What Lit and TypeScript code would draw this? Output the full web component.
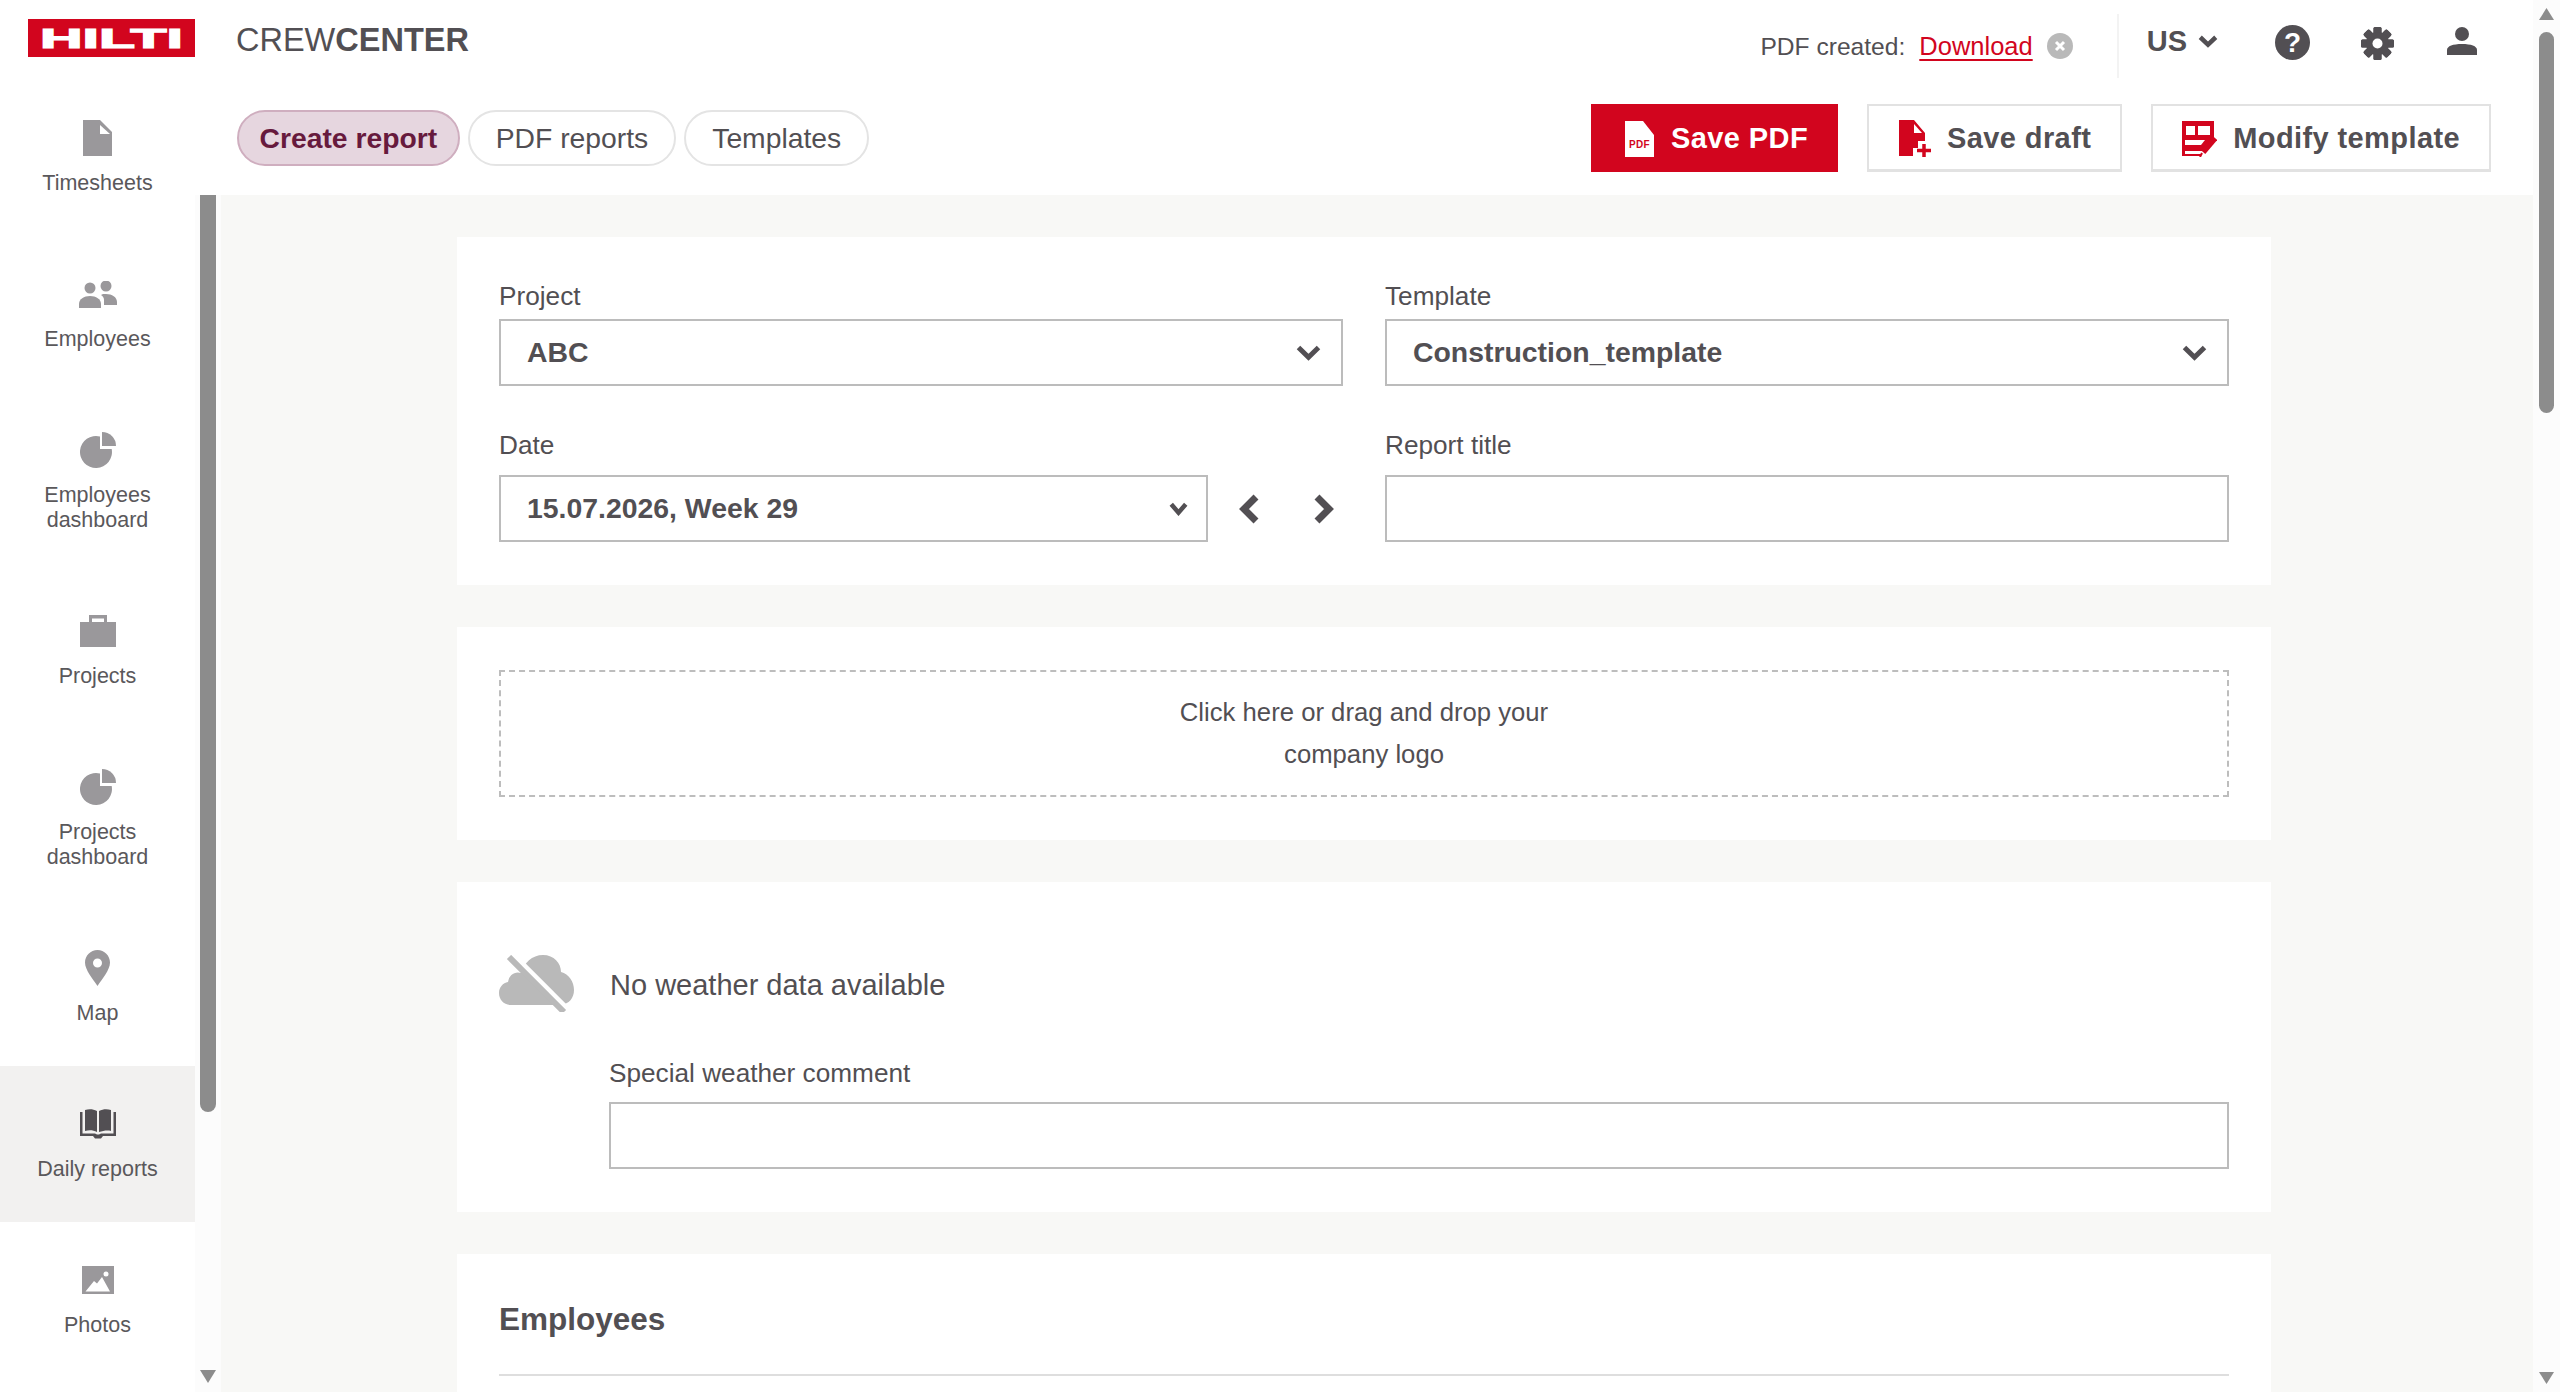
import {html, css, svg, LitElement} from 'lit';
import {customElement, state} from 'lit/decorators.js';

const DARK = '#524f53';
const RED = '#d2051e';

const fileIcon = svg`<svg width="29" height="36" viewBox="0 0 29 36"><path fill="currentColor" d="M0 0h17l12 12v24H0z"/><path fill="#fff" d="M17 5l10 9H17z"/></svg>`;
const peopleIcon = svg`<svg width="38" height="27" viewBox="0 0 38 27"><circle fill="currentColor" cx="11" cy="7" r="5.5"/><circle fill="currentColor" cx="27" cy="5" r="5.5"/><path fill="currentColor" d="M0 27v-4c0-5 5-8 11-8s11 3 11 8v4z"/><path fill="currentColor" d="M24 13h3c6 0 11 3 11 8v3H25v-5c0-2-1-4-3-5z"/></svg>`;
const pieIcon = svg`<svg width="36" height="36" viewBox="0 0 36 36"><path fill="currentColor" d="M20 4.5V17H31.7A16 16 0 1 1 20 4.5Z"/><path fill="currentColor" d="M22 0A14 14 0 0 1 36 14H22Z"/></svg>`;
const caseIcon = svg`<svg width="36" height="32" viewBox="0 0 36 32"><path fill="currentColor" d="M0 7h36v25H0z"/><path fill="currentColor" d="M9 0h18v7h-3V3.5H12V7H9z"/></svg>`;
const pinIcon = svg`<svg width="25" height="36" viewBox="0 0 25 36"><path fill="currentColor" fill-rule="evenodd" d="M12.5 0C5.6 0 0 5.6 0 12.5 0 20 8 29 12.5 36 17 29 25 20 25 12.5 25 5.6 19.4 0 12.5 0ZM12.5 8.5a4.5 4.5 0 1 1 0 9 4.5 4.5 0 0 1 0-9Z"/></svg>`;
const bookIcon = svg`<svg width="36" height="30" viewBox="0 0 36 30"><path fill="currentColor" d="M0 3h2.5v21.500H15l2 1h2l2-1h12.500V3H36v24H23l-2 2.500h-6L13 27H0z"/><path fill="currentColor" d="M5 1c4-1 8-1 12 1v21c-4-2-8-2-12-1zM19 2c4-2 8-2 12-1v21c-4-1-8 0-12 1z"/></svg>`;
const photoIcon = svg`<svg width="32" height="28" viewBox="0 0 32 28"><path fill="currentColor" d="M0 0h32v28H0z"/><circle fill="#fff" cx="24" cy="8" r="2.5"/><path fill="#fff" d="M3.500 25.500L12 15l3 2.500 5-6.500 8 14.500z"/></svg>`;

const chevron = (w: number, h: number, sw: number) => svg`<svg width=${w} height=${h} viewBox="0 0 ${w} ${h}"><path fill="none" stroke=${DARK} stroke-width=${sw} d="M${sw / 2} ${sw / 2}L${w / 2} ${h - sw * 0.75}L${w - sw / 2} ${sw / 2}"/></svg>`;

const navItems = [
    {label: ['Timesheets'], icon: fileIcon},
    {label: ['Employees'], icon: peopleIcon},
    {label: ['Employees', 'dashboard'], icon: pieIcon},
    {label: ['Projects'], icon: caseIcon},
    {label: ['Projects', 'dashboard'], icon: pieIcon},
    {label: ['Map'], icon: pinIcon},
    {label: ['Daily reports'], icon: bookIcon, active: true},
    {label: ['Photos'], icon: photoIcon},
];

const gearTeeth = [0, 45, 90, 135, 180, 225, 270, 315];

@customElement('app-root')
export class AppRoot extends LitElement {
    static styles = css`
        :host {
            display: flex;
            width: 2560px;
            height: 1392px;
            overflow: hidden;
            background: #fff;
            color: #524f53;
            font-family: "Liberation Sans", Arial, sans-serif;
        }
        svg { display: block; }
        .page {
            width: 2533px;
            display: flex;
            flex-direction: column;
        }
        /* top bar */
        .topbar {
            height: 80px;
            flex: none;
            display: flex;
            align-items: flex-start;
        }
        .logo { margin: 19px 0 0 28px; }
        .brand {
            margin: 21px 0 0 41px;
            font-size: 32.5px;
            line-height: 38px;
        }
        .brand b { font-weight: 700; }
        .top-right {
            margin-left: auto;
            display: flex;
            align-items: flex-start;
        }
        .pdf {
            margin-top: 31px;
            font-size: 24.6px;
            line-height: 30px;
        }
        .pdf a {
            margin-left: 14px;
            font-size: 25.5px;
            color: #d2051e;
            text-decoration: underline;
            text-underline-offset: 4px;
        }
        .close { margin: 33px 0 0 14px; }
        .divider {
            width: 2px;
            height: 64px;
            margin: 14px 28px 0 44px;
            background: #f3f3f3;
        }
        .lang {
            margin-top: 24px;
            font-size: 29px;
            line-height: 34px;
            font-weight: 700;
        }
        .lang-chevron { margin: 35px 0 0 11px; }
        .help { margin: 25px 0 0 57px; }
        .gear { margin: 27px 0 0 51px; }
        .user { margin: 27px 56px 0 53px; }
        /* below the top bar */
        .body {
            flex: 1;
            min-height: 0;
            display: flex;
        }
        .sidebar {
            width: 195px;
            flex: none;
            overflow: hidden;
        }
        .nav-item {
            box-sizing: border-box;
            padding: 40px 0;
            display: flex;
            flex-direction: column;
            align-items: center;
            color: #9a989b;
        }
        .nav-item.active {
            background: #f2f1f0;
            color: #524f53;
        }
        .nav-icon {
            height: 36px;
            display: flex;
            align-items: center;
            justify-content: center;
            margin-bottom: 15px;
        }
        .nav-label {
            font-size: 21.5px;
            line-height: 25px;
            text-align: center;
            color: #5a585b;
        }
        .side-track {
            width: 26px;
            flex: none;
            margin-top: 115px;
            background: #fcfcfc;
            display: flex;
            flex-direction: column;
            align-items: flex-start;
        }
        .side-thumb {
            width: 16px;
            height: 917px;
            margin-left: 5px;
            background: #8c8c8c;
            border-radius: 0 0 8px 8px;
        }
        .side-arrow { margin: 258px 0 0 5px; }
        .main {
            flex: 1;
            min-width: 0;
            display: flex;
            flex-direction: column;
        }
        .toolbar {
            height: 115px;
            flex: none;
            display: flex;
            align-items: flex-start;
            padding: 24px 42px 0 16px;
            box-sizing: border-box;
        }
        .tabs {
            display: flex;
            gap: 8px;
            margin-top: 6px;
        }
        .tab {
            height: 56px;
            box-sizing: border-box;
            padding: 0 26px;
            display: flex;
            align-items: center;
            border: 2px solid #e4e4e4;
            border-radius: 28px;
            font-size: 28.3px;
        }
        .tab.active {
            padding: 0 20.5px;
            background: #e6d6df;
            border-color: #cfaebf;
            color: #671a3d;
            font-weight: 700;
        }
        .actions {
            margin-left: auto;
            display: flex;
            gap: 29px;
        }
        .btn {
            height: 68px;
            box-sizing: border-box;
            padding: 2px 29px 0;
            display: flex;
            align-items: center;
            gap: 16px;
            border: 2px solid #e2e2e2;
            border-bottom-width: 3px;
            font-size: 29px;
            font-weight: 700;
            letter-spacing: 0.4px;
        }
        .btn.draft { padding-left: 30px; }
        .btn.primary {
            background: #d2051e;
            border-color: #d2051e;
            color: #fff;
            gap: 17px;
            padding: 2px 28px 0 32px;
        }
        .content {
            flex: 1;
            min-height: 0;
            overflow: hidden;
            background: #f8f8f6;
            padding: 42px 0 0 236px;
            display: flex;
            flex-direction: column;
            gap: 42px;
        }
        .card {
            width: 1814px;
            flex: none;
            box-sizing: border-box;
            background: #fff;
            padding: 43px 42px;
        }
        /* form */
        .form {
            display: grid;
            grid-template-columns: 1fr 1fr;
            column-gap: 42px;
            row-gap: 44px;
            padding-top: 1px;
        }
        label {
            display: block;
            font-size: 26.2px;
            line-height: 30px;
            margin-bottom: 8px;
        }
        .low label { margin-bottom: 15px; }
        .input {
            height: 67px;
            box-sizing: border-box;
            border: 2px solid #bcbcbc;
            background: #fff;
            padding: 0 20px 0 26px;
            display: flex;
            align-items: center;
            justify-content: space-between;
            font-size: 28.4px;
            font-weight: 700;
        }
        .date-row {
            display: flex;
            align-items: center;
        }
        .date-row .input { width: 709px; flex: none; padding-right: 18px; }
        .prev { margin-left: 30px; }
        .next { margin-left: 53px; }
        .drop {
            border: 2px dashed #bdbdbd;
            padding: 19px 0 20px;
            text-align: center;
            font-size: 25.7px;
            line-height: 42px;
        }
        .weather { padding-top: 73px; }
        .weather-row {
            display: flex;
            align-items: center;
            gap: 36px;
            font-size: 29px;
        }
        .weather-row span { padding-top: 4px; }
        .weather-field { margin: 46px 0 0 110px; }
        .weather-field label { margin-bottom: 14px; }
        .employees { padding-top: 45px; }
        h2 {
            margin: 0 0 35px;
            font-size: 31.5px;
            line-height: 40px;
            font-weight: 700;
        }
        .rule {
            height: 2px;
            background: #dedede;
        }
        .page-track {
            width: 27px;
            flex: none;
            background: #fcfcfc;
            display: flex;
            flex-direction: column;
        }
        .page-arrow-up { margin: 8px 0 0 6px; }
        .page-thumb {
            width: 15px;
            height: 381px;
            margin: 12px 0 0 6px;
            border-radius: 8px;
            background: #8c8c8c;
        }
        .page-arrow-down { margin: 959px 0 0 6px; }
    `;

    @state() activeTab = 'Create report';

    renderNav() {
        return navItems.map((item) => html`
            <div class="nav-item ${item.active ? 'active' : ''}">
                <div class="nav-icon">${item.icon}</div>
                <div class="nav-label">${item.label.map((l) => html`<div>${l}</div>`)}</div>
            </div>
        `);
    }

    renderTopbar() {
        return html`
            <div class="topbar">
                <svg class="logo" width="167" height="38" viewBox="0 0 167 38">
                    <rect width="167" height="38" fill=${RED}></rect>
                    <text x="12" y="29" font-family="Liberation Sans" font-weight="700" font-size="28" fill="#fff" stroke="#fff" stroke-width="1.2" textLength="143" lengthAdjust="spacingAndGlyphs">HILTI</text>
                </svg>
                <div class="brand">CREW<b>CENTER</b></div>
                <div class="top-right">
                    <div class="pdf">PDF created:<a>Download</a></div>
                    <svg class="close" width="26" height="26" viewBox="0 0 26 26">
                        <circle cx="13" cy="13" r="13" fill="#b9b9b9"></circle>
                        <path d="M9 9l8 8M17 9l-8 8" stroke="#fff" stroke-width="3"></path>
                    </svg>
                    <div class="divider"></div>
                    <div class="lang">US</div>
                    <div class="lang-chevron">${chevron(20, 13, 4.5)}</div>
                    <svg class="help" width="35" height="35" viewBox="0 0 35 35">
                        <circle cx="17.5" cy="17.5" r="17.5" fill=${DARK}></circle>
                        <text x="17.5" y="27" text-anchor="middle" font-family="Liberation Sans" font-weight="700" font-size="28" fill="#fff">?</text>
                    </svg>
                    <svg class="gear" width="33" height="33" viewBox="0 0 33 33">
                        ${gearTeeth.map((a) => svg`<rect x="12.5" y="0" width="8" height="33" rx="1.5" fill=${DARK} transform="rotate(${a} 16.5 16.5)"></rect>`)}
                        <circle cx="16.5" cy="16.5" r="11.5" fill=${DARK}></circle>
                        <circle cx="16.5" cy="16.5" r="5" fill="#fff"></circle>
                    </svg>
                    <svg class="user" width="30" height="28" viewBox="0 0 30 28">
                        <circle cx="15" cy="7" r="7" fill=${DARK}></circle>
                        <path d="M0 28v-5c0-4 6-6 15-6s15 2 15 6v5z" fill=${DARK}></path>
                    </svg>
                </div>
            </div>
        `;
    }

    renderToolbar() {
        return html`
            <div class="toolbar">
                <div class="tabs">
                    ${['Create report', 'PDF reports', 'Templates'].map((t) => html`
                        <div class="tab ${t === this.activeTab ? 'active' : ''}">${t}</div>
                    `)}
                </div>
                <div class="actions">
                    <div class="btn primary">
                        <svg width="29" height="36" viewBox="0 0 29 36">
                            <path d="M0 0h18l11 14v22H0z" fill="#fff"></path>
                            <text x="14.5" y="27" text-anchor="middle" font-family="Liberation Sans" font-weight="700" font-size="11" fill=${RED} textLength="21" lengthAdjust="spacingAndGlyphs">PDF</text>
                        </svg>
                        Save PDF
                    </div>
                    <div class="btn draft">
                        <svg width="32" height="37" viewBox="0 0 32 37">
                            <path d="M0 0h15l11 13v8h-7v7h-5v8H0z" fill=${RED}></path>
                            <path d="M15 4l8 9h-8z" fill="#fff"></path>
                            <path d="M18 30.5h14M25 24v13" stroke=${RED} stroke-width="3.5"></path>
                        </svg>
                        Save draft
                    </div>
                    <div class="btn">
                        <svg width="35" height="36" viewBox="0 0 35 36">
                            <path d="M0 0h32v17L21 29v1H3v3h17v-1l-1 1v2H0z" fill=${RED}></path>
                            <path d="M4 5h9v9H4zM16 5h12v9H16z" fill="#fff"></path>
                            <path d="M3 19h20l-4 5H3z" fill="#fff"></path>
                            <path d="M21 31l12-14" stroke=${RED} stroke-width="6"></path>
                            <path d="M18 36l2-4" stroke=${RED} stroke-width="2"></path>
                        </svg>
                        Modify template
                    </div>
                </div>
            </div>
        `;
    }

    renderCards() {
        return html`
            <div class="card">
                <div class="form">
                    <div>
                        <label>Project</label>
                        <div class="input">ABC ${chevron(25, 16, 5)}</div>
                    </div>
                    <div>
                        <label>Template</label>
                        <div class="input">Construction_template ${chevron(25, 16, 5)}</div>
                    </div>
                    <div class="low">
                        <label>Date</label>
                        <div class="date-row">
                            <div class="input">15.07.2026, Week 29 ${chevron(19, 14, 4.5)}</div>
                            <svg class="prev" width="22" height="30" viewBox="0 0 22 30"><path d="M18 3L6 15l12 12" fill="none" stroke=${DARK} stroke-width="7"></path></svg>
                            <svg class="next" width="22" height="30" viewBox="0 0 22 30"><path d="M4 3l12 12L4 27" fill="none" stroke=${DARK} stroke-width="7"></path></svg>
                        </div>
                    </div>
                    <div class="low">
                        <label>Report title</label>
                        <div class="input"></div>
                    </div>
                </div>
            </div>
            <div class="card">
                <div class="drop">Click here or drag and drop your<br>company logo</div>
            </div>
            <div class="card weather">
                <div class="weather-row">
                    <svg width="75" height="57" viewBox="0 0 75 57">
                        <path d="M12 50C5 50 0 45 0 38c0-6 4-10 9-11 1-7 7-11 13-9C25 8 33 0 44 0c11 0 18 8 18 17 8 2 13 10 13 18 0 8-5 14-13 15z" fill="#b9b9b9"></path>
                        <path d="M14 0l55 55" stroke="#fff" stroke-width="6"></path>
                        <path d="M10 2l55 55" stroke="#b9b9b9" stroke-width="6"></path>
                    </svg>
                    <span>No weather data available</span>
                </div>
                <div class="weather-field">
                    <label>Special weather comment</label>
                    <div class="input"></div>
                </div>
            </div>
            <div class="card employees">
                <h2>Employees</h2>
                <div class="rule"></div>
            </div>
        `;
    }

    render() {
        return html`
            <div class="page">
                ${this.renderTopbar()}
                <div class="body">
                    <nav class="sidebar">${this.renderNav()}</nav>
                    <div class="side-track">
                        <div class="side-thumb"></div>
                        <svg class="side-arrow" width="16" height="13" viewBox="0 0 16 13"><path d="M0 0h16l-8 13z" fill="#8c8c8c"></path></svg>
                    </div>
                    <div class="main">
                        ${this.renderToolbar()}
                        <div class="content">${this.renderCards()}</div>
                    </div>
                </div>
            </div>
            <div class="page-track">
                <svg class="page-arrow-up" width="15" height="12" viewBox="0 0 15 12"><path d="M7.5 0L15 12H0z" fill="#8c8c8c"></path></svg>
                <div class="page-thumb"></div>
                <svg class="page-arrow-down" width="15" height="12" viewBox="0 0 15 12"><path d="M0 0h15L7.5 12z" fill="#8c8c8c"></path></svg>
            </div>
        `;
    }
}
